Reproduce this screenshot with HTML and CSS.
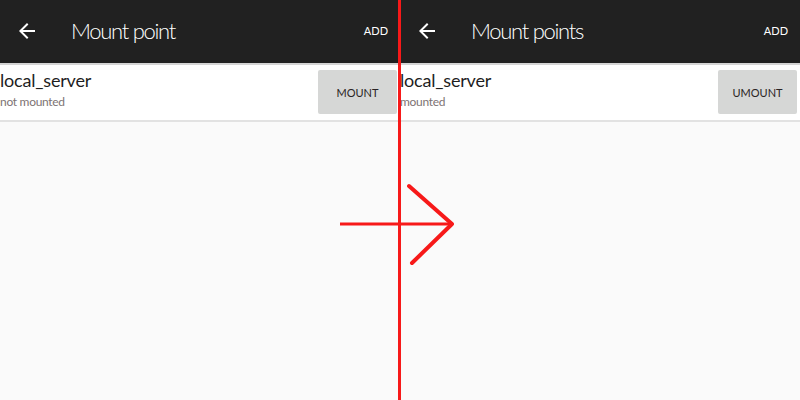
FILE: index.html
```html
<!DOCTYPE html>
<html lang="en">
<head>
  <meta charset="UTF-8" />
  <meta name="viewport" content="width=device-width, initial-scale=1.0"/>
  <title>Mount points</title>
  <link rel="stylesheet" href="styles.css">
</head>
<body>

  <div class="compare">

    <!-- Before -->
    <div class="screen">
      <header>
        <svg class="back" viewBox="0 0 24 24" width="24" height="24">
          <path d="M20 11H7.83l5.59-5.59L12 4l-8 8 8 8 1.41-1.41L7.83 13H20v-2z" fill="#fff"/>
        </svg>
        <h1>Mount point</h1>
        <a href="#" class="action">ADD</a>
      </header>
      <div class="mount-row">
        <div class="mount-info">
          <div class="mount-name">local_server</div>
          <div class="mount-state">not mounted</div>
        </div>
        <button class="mount-btn">MOUNT</button>
      </div>
    </div>

    <!-- After -->
    <div class="screen">
      <header>
        <svg class="back" viewBox="0 0 24 24" width="24" height="24">
          <path d="M20 11H7.83l5.59-5.59L12 4l-8 8 8 8 1.41-1.41L7.83 13H20v-2z" fill="#fff"/>
        </svg>
        <h1>Mount points</h1>
        <a href="#" class="action">ADD</a>
      </header>
      <div class="mount-row">
        <div class="mount-info">
          <div class="mount-name">local_server</div>
          <div class="mount-state">mounted</div>
        </div>
        <button class="mount-btn">UMOUNT</button>
      </div>
    </div>

    <!-- Red divider and arrow drawn over both screens -->
    <svg class="overlay" viewBox="0 0 800 400" width="800" height="400">
      <line x1="399.5" y1="0" x2="399.5" y2="400" stroke="#f71919" stroke-width="3"/>
      <line x1="340" y1="224" x2="452" y2="224" stroke="#f71919" stroke-width="3"/>
      <polyline points="409,186 452,224 412,263" fill="none" stroke="#f71919" stroke-width="4" stroke-linecap="round" stroke-linejoin="round"/>
    </svg>

  </div>

</body>
</html>
```

FILE: styles.css
```css
* {
  box-sizing: border-box;
}

body {
  margin: 0;
  padding: 0;
  font-family: Lato, "Noto Sans", sans-serif;
  background: #fafafa;
}

.compare {
  position: relative;
  display: flex;
  width: 800px;
  height: 400px;
  overflow: hidden;
}

.screen {
  width: 400px;
  height: 400px;
  background: #fafafa;
}

header {
  display: flex;
  align-items: center;
  height: 65px;
  padding: 0 12px 2px 15px;
  background: #212121;
  border-bottom: 2px solid #d4d4d4;
  color: #fff;
}

.back {
  flex-shrink: 0;
}

header h1 {
  margin: 0 0 0 32px;
  font-size: 22px;
  font-weight: 300;
  letter-spacing: -1.3px;
}

.action {
  margin-left: auto;
  color: #fff;
  text-decoration: none;
  font-size: 11px;
}

.mount-row {
  display: flex;
  justify-content: space-between;
  height: 57px;
  padding: 5px 3px 0 0;
  background: #fff;
  border-bottom: 2px solid #e2e2e2;
}

.mount-info {
  margin-top: -1px;
}

.mount-name {
  font-size: 18px;
  color: #1e1e1e;
  line-height: 22px;
  letter-spacing: -0.2px;
}

.mount-state {
  margin-top: 3px;
  font-size: 12px;
  color: #7d7373;
  letter-spacing: -0.3px;
}

.mount-btn {
  width: 79px;
  height: 44px;
  border: none;
  border-radius: 2px;
  background: #d6d7d6;
  color: #2a2424;
  font-family: inherit;
  font-size: 11px;
}

.overlay {
  position: absolute;
  top: 0;
  left: 0;
}
```
